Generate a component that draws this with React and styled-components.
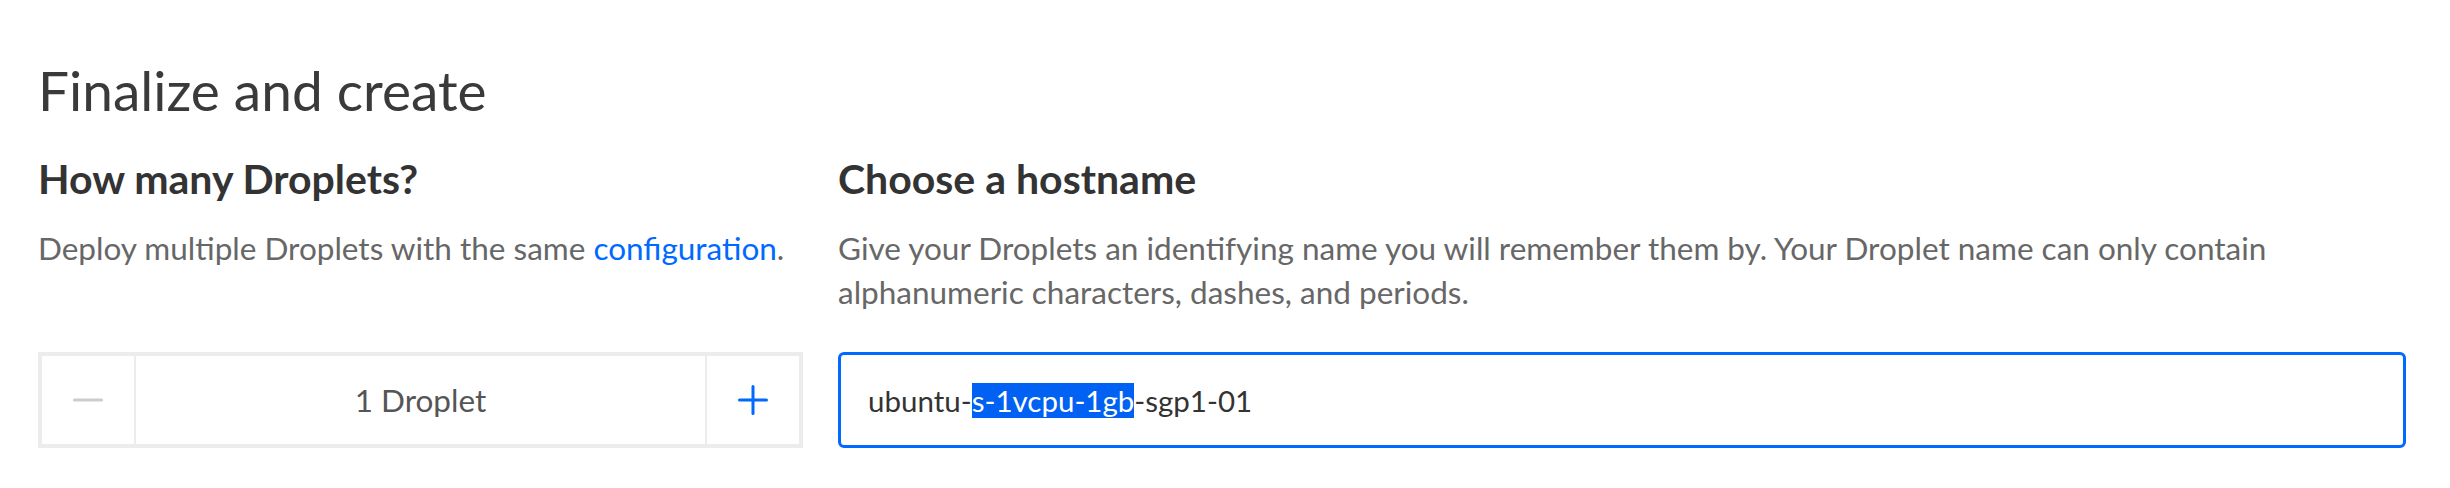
import React from "react";
import styled, { createGlobalStyle } from "styled-components";

const GlobalStyle = createGlobalStyle`
    html, body {
        margin: 0;
        padding: 0;
        background: #ffffff;
    }
    body {
        font-family: Lato, "Open Sans", sans-serif;
        color: #333333;
    }
`

const Page = styled.div`
    padding: 59px 44px 0 38px;
`

const Title = styled.h1`
    margin: 0 0 35px 0;
    font-size: 55px;
    line-height: 62px;
    font-weight: 400;
    color: #3a3a3a;
`

const Columns = styled.div`
    display: grid;
    grid-template-columns: 765px 1fr;
    column-gap: 35px;
`

const Column = styled.div`
    display: flex;
    flex-direction: column;
`

const Heading = styled.h2`
    margin: 0;
    font-size: 41px;
    line-height: 46px;
    font-weight: 700;
    color: #333333;
`

const Description = styled.p`
    margin: 24px 0 0 0;
    font-size: 31.5px;
    line-height: 44px;
    color: #676767;
    min-height: 88px;
`

const Link = styled.a`
    color: #0069ff;
    text-decoration: none;
`

const Counter = styled.div`
    margin-top: 38px;
    display: flex;
    height: 96px;
    box-sizing: border-box;
    border: 4px solid #ececec;
`

const StepButton = styled.button`
    width: 94px;
    flex: none;
    display: flex;
    align-items: center;
    justify-content: center;
    border: none;
    background: #ffffff;
    padding: 0;
    cursor: pointer;
    ${(p) => (p.$side === "left" ? "border-right: 2px solid #ececec;" : "border-left: 2px solid #ececec;")}
`

const CountLabel = styled.div`
    flex: 1;
    display: flex;
    align-items: center;
    justify-content: center;
    font-size: 31.5px;
    color: #555555;
`

const Input = styled.div`
    margin-top: 38px;
    height: 96px;
    box-sizing: border-box;
    border: 3px solid #0069ff;
    border-radius: 6px;
    padding: 0 27px;
    display: flex;
    align-items: center;
    font-size: 29.5px;
    color: #333333;
    white-space: pre;
`

const Selected = styled.span`
    background: #0061f2;
    color: #ffffff;
`

function MinusIcon() {
    return (
        <svg width="30" height="4" viewBox="0 0 30 4">
            <line x1="1.5" y1="2" x2="28.5" y2="2" stroke="#cccccc" strokeWidth="3" strokeLinecap="round" />
        </svg>
    );
}

function PlusIcon() {
    return (
        <svg width="30" height="30" viewBox="0 0 30 30">
            <line x1="1.5" y1="15" x2="28.5" y2="15" stroke="#0069ff" strokeWidth="3" strokeLinecap="round" />
            <line x1="15" y1="1.5" x2="15" y2="28.5" stroke="#0069ff" strokeWidth="3" strokeLinecap="round" />
        </svg>
    );
}

export default function App() {
    return (
        <Page>
            <GlobalStyle />
            <Title>Finalize and create</Title>
            <Columns>
                <Column>
                    <Heading>How many Droplets?</Heading>
                    <Description>
                        Deploy multiple Droplets with the same <Link href="#">configuration</Link>.
                    </Description>
                    <Counter>
                        <StepButton $side="left" aria-label="decrease">
                            <MinusIcon />
                        </StepButton>
                        <CountLabel>1 Droplet</CountLabel>
                        <StepButton $side="right" aria-label="increase">
                            <PlusIcon />
                        </StepButton>
                    </Counter>
                </Column>
                <Column>
                    <Heading>Choose a hostname</Heading>
                    <Description>
                        Give your Droplets an identifying name you will remember them by. Your Droplet name can only contain alphanumeric characters, dashes, and periods.
                    </Description>
                    <Input>
                        ubuntu-<Selected>s-1vcpu-1gb</Selected>-sgp1-01
                    </Input>
                </Column>
            </Columns>
        </Page>
    );
}
